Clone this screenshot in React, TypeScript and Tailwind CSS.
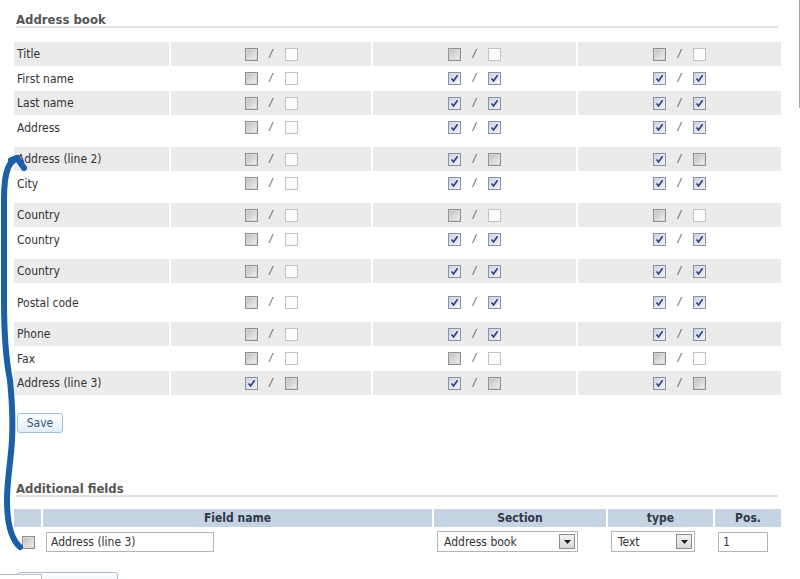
import React from 'react';

type Box = 'd' | 'l' | 'c';

// d = grey unchecked, l = light unchecked, c = checked
const rows: { label: string; cols: [Box, Box][]; gray: boolean; gap?: boolean }[] = [
  { label: 'Title', cols: [['d', 'l'], ['d', 'l'], ['d', 'l']], gray: true },
  { label: 'First name', cols: [['d', 'l'], ['c', 'c'], ['c', 'c']], gray: false },
  { label: 'Last name', cols: [['d', 'l'], ['c', 'c'], ['c', 'c']], gray: true },
  { label: 'Address', cols: [['d', 'l'], ['c', 'c'], ['c', 'c']], gray: false },
  { label: 'Address (line 2)', cols: [['d', 'l'], ['c', 'd'], ['c', 'd']], gray: true, gap: true },
  { label: 'City', cols: [['d', 'l'], ['c', 'c'], ['c', 'c']], gray: false },
  { label: 'Country', cols: [['d', 'l'], ['d', 'l'], ['d', 'l']], gray: true, gap: true },
  { label: 'Country', cols: [['d', 'l'], ['c', 'c'], ['c', 'c']], gray: false },
  { label: 'Country', cols: [['d', 'l'], ['c', 'c'], ['c', 'c']], gray: true, gap: true },
  { label: 'Postal code', cols: [['d', 'l'], ['c', 'c'], ['c', 'c']], gray: false, gap: true },
  { label: 'Phone', cols: [['d', 'l'], ['c', 'c'], ['c', 'c']], gray: true, gap: true },
  { label: 'Fax', cols: [['d', 'l'], ['d', 'l'], ['d', 'l']], gray: false },
  { label: 'Address (line 3)', cols: [['c', 'd'], ['c', 'd'], ['c', 'd']], gray: true },
];

function Check({ kind }: { kind: Box }) {
  if (kind === 'c') {
    return (
      <span className="flex h-[13px] w-[13px] items-center justify-center border border-[#8a93a6] bg-gradient-to-br from-[#cdd4e0] to-[#f2f4f8]">
        <svg width="9" height="9" viewBox="0 0 9 9">
          <path d="M1.5 4.5 L3.6 7 L7.6 1.2" fill="none" stroke="#2c3b8c" strokeWidth="1.6" />
        </svg>
      </span>
    );
  }
  if (kind === 'd') {
    return (
      <span className="block h-[13px] w-[13px] border border-[#8f8f8f] bg-gradient-to-br from-[#bdbdbd] to-[#f3f3f3] shadow-[inset_0_0_0_1px_#d8d8d8]" />
    );
  }
  return <span className="block h-[13px] w-[13px] border border-[#c2c2c2] bg-[#fbfbfb]" />;
}

function Pair({ pair }: { pair: [Box, Box] }) {
  return (
    <div className="flex items-center justify-center gap-[10px]">
      <Check kind={pair[0]} />
      <span className="w-[7px] text-center text-[11px] italic text-[#555]">/</span>
      <Check kind={pair[1]} />
    </div>
  );
}

function SectionTitle({ children }: { children: React.ReactNode }) {
  return (
    <div className="ml-[2px] mr-[3px] border-b-2 border-[#e2e2e2] text-[13px] font-bold leading-[13px] text-[#555]">
      {children}
    </div>
  );
}

function Select({ value, w }: { value: string; w: string }) {
  return (
    <div className={`flex h-[21px] items-center justify-between border border-[#b4b4b4] bg-white pl-[6px] pr-[2px] text-[12px] text-[#333] ${w}`}>
      <span>{value}</span>
      <span className="flex h-[15px] w-[16px] items-center justify-center border border-[#8c8c8c] bg-gradient-to-b from-[#f4f4f4] to-[#d6d6d6]">
        <svg width="7" height="4" viewBox="0 0 7 4">
          <path d="M0 0 H7 L3.5 4 Z" fill="#222" />
        </svg>
      </span>
    </div>
  );
}

export default function App() {
  return (
    <div
      className="relative flex h-[579px] w-[800px] overflow-hidden bg-white text-[#333]"
      style={{ fontFamily: 'Tahoma, "DejaVu Sans Condensed", "DejaVu Sans", sans-serif' }}
    >
      <div className="flex-1 pl-[14px] pr-[18px] pt-[13px]">
        <SectionTitle>Address book</SectionTitle>

        <div className="mt-[14px] flex flex-col">
          {rows.map((r, i) => (
            <div
              key={i}
              className={`grid grid-cols-[155px_200px_1fr_1fr] gap-x-[2px] ${r.gray ? 'h-[24px]' : 'h-[25px]'} ${r.gap ? 'mt-[7px]' : ''}`}
            >
              <div className={`flex items-center pl-[3px] text-[12px] ${r.gray ? 'bg-[#ebebeb]' : ''}`}>{r.label}</div>
              {r.cols.map((p, j) => (
                <div key={j} className={`flex items-center justify-center ${r.gray ? 'bg-[#ebebeb]' : ''}`}>
                  <Pair pair={p} />
                </div>
              ))}
            </div>
          ))}
        </div>

        <button className="ml-[3px] mt-[18px] flex h-[20px] w-[46px] items-center justify-center rounded-[3px] border border-[#a6bcd2] bg-gradient-to-b from-white to-[#e2ecf6] text-[12px] text-[#30587f]">
          Save
        </button>

        <div className="mt-[49px]">
          <SectionTitle>Additional fields</SectionTitle>
        </div>

        <div className="mt-[12px] grid grid-cols-[27px_389px_172px_105px_66px] gap-x-[2px]">
          <div className="h-[18px] bg-[#c6d3e3]" />
          {['Field name', 'Section', 'type', 'Pos.'].map((h) => (
            <div key={h} className="flex h-[18px] items-center justify-center bg-[#c6d3e3] text-[12px] font-bold text-[#2f3847]">
              {h}
            </div>
          ))}
          <div className="flex h-[29px] items-center justify-center pl-[2px] pt-[1px]">
            <Check kind="d" />
          </div>
          <div className="flex items-center pl-[3px]">
            <div className="flex h-[20px] w-[168px] items-center border border-[#b4b4b4] pl-[4px] text-[12px]">Address (line 3)</div>
          </div>
          <div className="flex items-center pl-[3px]">
            <Select value="Address book" w="w-[141px]" />
          </div>
          <div className="flex items-center pl-[3px]">
            <Select value="Text" w="w-[84px]" />
          </div>
          <div className="flex items-center pl-[3px]">
            <div className="flex h-[20px] w-[50px] items-center border border-[#b4b4b4] pl-[4px] text-[12px]">1</div>
          </div>
        </div>

        <button className="ml-[3px] mt-[16px] h-[22px] w-[101px] rounded-[3px] border border-[#a6bcd2] bg-gradient-to-b from-white to-[#e2ecf6]" />
      </div>

      <div className="w-px">
        <div className="h-[108px] w-px bg-[#a5a5a5]" />
      </div>

      {/* small box lying over the cut-off button */}
      <div className="absolute left-0 top-[574px] h-[10px] w-[42px] border-r border-t border-[#bdbdbd] bg-white" />

      {/* hand-drawn annotation arrow */}
      <svg className="pointer-events-none absolute left-0 top-0" width="40" height="579" viewBox="0 0 40 579">
        <g fill="none" stroke="#1c5ea8" strokeWidth="6" strokeLinecap="round" strokeLinejoin="round">
          <path d="M20 547 C12 540 7 525 7 500 C7 480 11 460 12 440 C13 420 12 400 10 380 C6 360 4 340 4 300 L4 200 C4 185 5 175 8 168 C10 163 13 160 17 158" />
          <path d="M17 158 L24 168" />
          <path d="M17 158 L11 160" />
        </g>
      </svg>
    </div>
  );
}
